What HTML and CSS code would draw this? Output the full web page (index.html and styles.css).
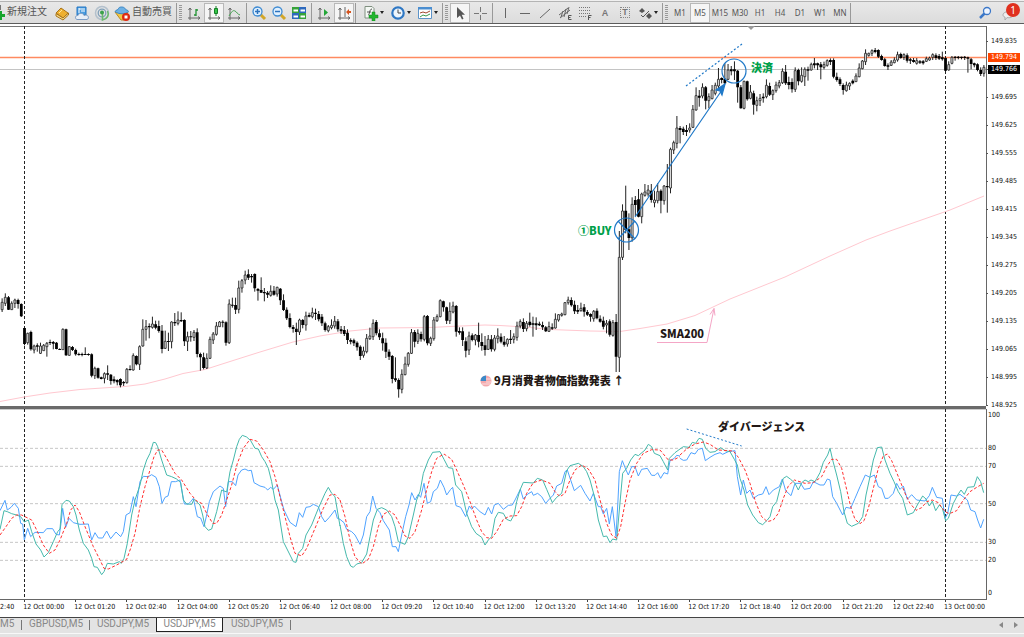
FILE: index.html
```html
<!DOCTYPE html>
<html lang="ja">
<head>
<meta charset="utf-8">
<title>USDJPY,M5</title>
<link rel="stylesheet" href="styles.css">
</head>
<body>
<header class="toolbar">
  <button class="tool text-tool new-order"><svg width="5" height="18" viewBox="0 0 5 18"><path d="M0 3h1v5H0z" fill="#777"/><path d="M0 9h2v3h3v3H2v3H0z" fill="#18a52c"/></svg>新規注文</button>
  <button class="tool" aria-label="book"><svg viewBox="0 0 16 16"><path d="M2 8l5-5 7 5-5 5z" fill="#eeb030" stroke="#a8741a"/><path d="M2 8.500V11l7 4 5.500-5V8L9 13z" fill="#f7dc8c" stroke="#a8741a"/><path d="M5 8l3-3" stroke="#ffe69a"/></svg></button>
  <button class="tool" aria-label="cloud"><svg viewBox="0 0 16 16"><path d="M3 2h9v8H3z" fill="#4b9de0" stroke="#2376c4"/><path d="M5 4h6M7 6h4M5 3v5" stroke="#fff"/><path d="M3 14.500c-3-1-1-5 1-4 1-3 5-3 6 0 4-2 6 3 3 4z" fill="#e7eef7" stroke="#7c9cc4"/></svg></button>
  <button class="tool" aria-label="signals"><svg viewBox="0 0 16 16" fill="none"><circle cx="8" cy="8" r="6.500" stroke="#b3c0cc" stroke-width="1.500"/><circle cx="8" cy="8" r="3.800" stroke="#7f9fb8" stroke-width="1.300"/><path d="M8.500 7v8c5-1 7-5 5-9" stroke="#6cba6e" stroke-width="1.600"/><circle cx="8" cy="7.500" r="2" fill="#3aa04c"/></svg></button>
  <button class="tool text-tool auto"><svg viewBox="0 0 16 16"><path d="M1 7h13l-4 8H7z" fill="#f2c744" stroke="#b98a1e"/><path d="M1 6.500c1-2 3-1 3.500-3C5 1.500 10 1.500 11 3.500c.5 2 3 1 3.500 3-3 3-10 3-13.500 0z" fill="#6eb1e4" stroke="#3b86c3"/><circle cx="12" cy="12" r="4" fill="#dd2b12"/><path d="M10.500 10.500h3v3h-3z" fill="#fff"/></svg>自動売買</button>
  <i class="sep"></i><i class="grip"></i>
  <button class="tool" aria-label="bar chart"><svg viewBox="0 0 16 16" fill="none"><path d="M4 3v12M2 13h12M2.500 5L4 3l1.500 2M12 11.500l2 1.500-2 1.500" stroke="#666"/><path d="M10 4v7M8 10h2M10 5h2" stroke="#239334" stroke-width="1.300"/></svg></button>
  <button class="tool pressed" aria-label="candles"><svg viewBox="0 0 16 16" fill="none"><path d="M4 3v12M2 13h12M2.500 5L4 3l1.500 2M12 11.500l2 1.500-2 1.500" stroke="#666"/><path d="M10 1v10" stroke="#148026"/><path d="M8.500 3.500h3v5h-3z" fill="#35c548" stroke="#148026"/></svg></button>
  <button class="tool" aria-label="line chart"><svg viewBox="0 0 16 16" fill="none"><path d="M4 3v12M2 13h12M2.500 5L4 3l1.500 2M12 11.500l2 1.500-2 1.500" stroke="#666"/><path d="M3 11c3-5 4-6 6-5s2 3 5 4" stroke="#49a455"/></svg></button>
  <i class="sep wide"></i>
  <button class="tool" aria-label="zoom in"><svg viewBox="0 0 16 16"><path d="M9.500 9.500l4.500 4.500" stroke="#d2a628" stroke-width="3"/><circle cx="6.500" cy="6.500" r="4.500" fill="#dff0ff" stroke="#3f8bd2" stroke-width="1.300"/><path d="M4 6.500h5M6.500 4v5" stroke="#2b72bd" stroke-width="1.500"/></svg></button>
  <button class="tool" aria-label="zoom out"><svg viewBox="0 0 16 16"><path d="M9.500 9.500l4.500 4.500" stroke="#d2a628" stroke-width="3"/><circle cx="6.500" cy="6.500" r="4.500" fill="#dff0ff" stroke="#3f8bd2" stroke-width="1.300"/><path d="M4 6.500h5" stroke="#2b72bd" stroke-width="1.500"/></svg></button>
  <button class="tool" aria-label="tile"><svg viewBox="0 0 16 16"><path d="M1 2h7v6H1zM8 8h7v6H8z" fill="#36a33a"/><path d="M8 2h7v6H8zM1 8h7v6H1z" fill="#2d69bd"/><path d="M2.500 4.500H7v2H2.500zM9.500 4.500H14v2H9.500zM2.500 10.500H7v2H2.500zM9.500 10.500H14v2H9.500z" fill="#fff"/></svg></button>
  <i class="sep wide"></i>
  <button class="tool" aria-label="auto scroll"><svg viewBox="0 0 16 16" fill="none"><path d="M4 3v12M2 13h12M2.500 5L4 3l1.500 2M12 11.500l2 1.500-2 1.500" stroke="#666"/><path d="M8 4l4 3.500L8 11z" fill="#23a637"/></svg></button>
  <button class="tool pressed" aria-label="chart shift"><svg viewBox="0 0 16 16" fill="none"><path d="M4 3v12M2 13h12M2.500 5L4 3l1.500 2M12 11.500l2 1.500-2 1.500M9 2v10" stroke="#666"/><path d="M10 7l3-3v2h2v2h-2v2z" fill="#d6541e"/></svg></button>
  <i class="sep gap"></i>
  <button class="tool drop" aria-label="indicators"><svg viewBox="0 0 16 16"><path d="M2 1.500h7l2 2V13H2z" fill="#f4f8f4" stroke="#809080"/><path d="M5 10c2 0 1-6 4-6M4 7h4" stroke="#555" fill="none"/><path d="M9 7h3v3h3v3h-3v3H9v-3H6v-3h3z" fill="#22b52e" stroke="#108a1c" stroke-width=".5"/></svg></button>
  <button class="tool drop" aria-label="periods"><svg viewBox="0 0 16 16"><circle cx="8" cy="8" r="5.700" fill="#eef6fd" stroke="#2f78c4" stroke-width="2.200"/><path d="M8 4.500V8h3" stroke="#444" fill="none"/></svg></button>
  <button class="tool drop" aria-label="templates"><svg viewBox="0 0 16 16"><path d="M1.500 2.500h13v11h-13z" fill="#fff" stroke="#5d94c9"/><path d="M1 2h14v2.500H1z" fill="#4b8ed0"/><path d="M3 8l3-1 3 1 4-2" stroke="#a3472c" fill="none"/><path d="M3 12l3-2 3 1 4-2" stroke="#3d984c" fill="none"/></svg></button>
  <i class="sep"></i><i class="grip"></i>
  <button class="tool pressed" aria-label="cursor"><svg viewBox="0 0 16 16"><path d="M5 2v11l3-2.500 2 4 1.500-.8-1.800-3.900H13z" fill="#555"/></svg></button>
  <button class="tool" aria-label="crosshair"><svg viewBox="0 0 16 16"><path d="M8.500 2v5M8.500 10v5M2 8.500h5M10 8.500h5" stroke="#777"/></svg></button>
  <i class="sep wide"></i>
  <button class="tool" aria-label="vertical line"><svg viewBox="0 0 16 16"><path d="M8.500 3v10" stroke="#666"/></svg></button>
  <button class="tool" aria-label="horizontal line"><svg viewBox="0 0 16 16"><path d="M3 8.500h10" stroke="#666"/></svg></button>
  <button class="tool" aria-label="trend line"><svg viewBox="0 0 16 16"><path d="M3 13l10-9" stroke="#666"/></svg></button>
  <button class="tool" aria-label="channel"><svg viewBox="0 0 16 16" fill="none"><path d="M2 10l9-7M3 13l10-8M4 12l2-6M7 12l2-8M10 9l2-7" stroke="#666"/><path d="M14.500 10.500h-3v4h3M11.500 12.500h2" stroke="#555"/></svg></button>
  <button class="tool" aria-label="fibonacci"><svg viewBox="0 0 16 16" fill="none"><path d="M2 2.500h12M2 5.500h12M2 8.500h12M2 11.500h7" stroke="#777" stroke-dasharray="1 1"/><path d="M14.500 10.500h-3V15M11.500 12.500h2" stroke="#555"/></svg></button>
  <button class="tool letter">A</button>
  <button class="tool letter"><span class="boxed">T</span></button>
  <button class="tool drop arrows" aria-label="arrows"><svg viewBox="0 0 16 16" fill="none"><path d="M5 3l3 3-3 2-3-2zM12 8l3 3-3 3-3-3z" fill="#555"/><path d="M4 10l2 2 6-6" stroke="#555"/></svg></button>
  <i class="sep"></i><i class="grip"></i>
  <button class="tool period">M1</button><button class="tool period pressed">M5</button><button class="tool period">M15</button><button class="tool period">M30</button><button class="tool period">H1</button><button class="tool period">H4</button><button class="tool period">D1</button><button class="tool period">W1</button><button class="tool period">MN</button>
  <i class="sep"></i>
  <button class="tool search" aria-label="search"><svg viewBox="0 0 16 16" fill="none"><path d="M7.500 8.500L3 13" stroke="#3c78c8" stroke-width="2.500"/><circle cx="10" cy="6" r="3.500" fill="#eef5ff" stroke="#3c78c8" stroke-width="1.300"/></svg></button>
  <button class="tool chat" aria-label="notifications"><svg viewBox="0 0 16 16"><path d="M1 10c0-4 10-5 10-1 0 4-4 4-6 3.500L3 15v-3c-1 0-2-1-2-2z" fill="#eee" stroke="#aaa"/></svg><span class="badge">1</span></button>
</header>

<main class="chart">
  <section class="plot price-plot">
    <svg class="canvas" viewBox="0 26 986 380" preserveAspectRatio="none">
      <path d="M0 57.500H986" stroke="#ff8a60" stroke-width="1.500"/>
      <path d="M0 69.500H986" stroke="#c4c4c4"/>
      <path class="day" d="M24.500 26V406M945.500 26V406"/>
      <path class="sma" d="M0 401.500L24 397 50 393 80 389.500 110 387.500 125 386.500 145 384 165 379 183 373.500 205 369.500 230 361.500 260 352 293 342 320 336 350 331 380 328 430 327.500 450 326.500 485 325 500 325.500 525 327 550 329.500 590 331 620 331.500 640 328.500 667 324 695 315.500 730 299 785 277 830 256 866 240 890 231 950 210 984 196"/>
      <g id="candles"></g>
      <path d="M747 26h8l-4 4z" fill="#999"/>
      <g class="mark">
        <circle cx="626.500" cy="230" r="12"/><circle cx="734" cy="71" r="12"/>
        <path d="M618 221l17 18M618 239l17-18M635 217L722 90"/>
        <path d="M686 86L742 44" stroke-dasharray="2 2"/>
        <path d="M725 84l-3 11-2-4-4-1z" fill="#2079c8"/>
      </g>
      <path d="M657 342.500h50l7-34m-4 6l4-6 1 7" fill="none" stroke="#f4a6c6"/>
      <circle cx="486" cy="381" r="5.500" fill="#f3a9ad"/><path d="M486 379h5M486 382h5M482 384h8" stroke="#fbdcdd"/><path d="M486 375.500a5.500 5.500 0 0 0-5.500 5.500h5.500z" fill="#3c8ac8"/>
    </svg>
    <span class="note green exit">決済</span>
    <span class="note green buy">①BUY</span>
    <span class="note sma-label">SMA200</span>
    <span class="note cpi">9月消費者物価指数発表 ↑</span>
  </section>
  <aside class="axis price-axis">
    <ol class="prices"><li>149.835</li><li></li><li>149.695</li><li>149.625</li><li>149.555</li><li>149.485</li><li>149.415</li><li>149.345</li><li>149.275</li><li>149.205</li><li>149.135</li><li>149.065</li><li>148.995</li><li>148.925</li></ol>
    <span class="quote ask">149.794</span><span class="quote bid">149.766</span>
  </aside>
  <div class="divider"></div>
  <section class="plot">
    <svg class="canvas" viewBox="0 27 2958 570" preserveAspectRatio="none">
      <path class="level" d="M0 145H2958M0 199H2958M0 311H2958M0 427H2958M0 481H2958"/>
      <path class="day" d="M73.500 27V597M2836.500 27V597"/>
      <path class="blue" d="M0 332L15 301 22 330 33 322 43 310 55 325 62 370 68 372 73 420 83 385 92 410 105 397 130 398 140 386 158 386 168 403 178 405 183 370 188 325 197 382 207 355 220 368 240 373 265 372 275 420 285 398 295 414 308 414 320 393 332 416 348 396 362 410 370 395 378 345 390 338 400 290 408 320 420 245 430 229 445 230 455 224 468 232 478 260 486 310 495 292 504 288 514 245 527 245 540 240 553 312 565 312 572 305 580 295 592 350 602 354 612 380 620 345 628 305 640 275 660 258 670 265 677 320 685 245 697 245 707 257 714 225 725 210 735 207 745 212 754 211 762 248 780 258 795 262 803 270 812 262 820 268 832 255 845 305 852 330 870 367 888 380 898 338 908 352 918 322 930 320 940 313 955 320 965 350 975 366 988 352 1005 330 1012 355 1020 358"/>
      <path class="teal" d="M0 388L12 332 22 335 35 341 50 345 62 350 73 366 85 360 95 395 108 432 122 450 132 471 145 458 160 425 173 395 180 387 186 314 198 301 208 303 220 320 228 345 238 390 250 430 265 450 275 475 282 500 292 502 305 524 312 515 322 490 340 492 358 485 364 490 372 475 382 430 395 345 405 300 420 255 430 210 440 180 450 160 460 127 467 128 473 140 485 180 500 225 515 230 530 237 542 248 550 300 560 312 575 313 582 298 600 315 608 345 615 380 625 391 635 387 650 335 665 270 680 276 690 215 700 180 710 140 718 118 727 106 740 111 752 122 765 145 775 147 785 170 795 185 805 205 815 245 825 300 835 330 850 425 870 465 880 485 888 487 895 460 908 445 918 405 935 375 955 325 975 280 985 262 995 280 1005 290 1020 378"/>
      <path class="red" d="M0 405L18 380 35 355 50 345 65 345 95 360 110 390 130 435 148 460 165 450 180 420 200 370 212 330 225 315 238 335 255 380 280 440 300 480 312 505 325 507 350 495 380 478 392 445 405 400 420 320 435 260 450 210 462 170 473 150 485 150 500 175 525 220 545 240 570 280 590 303 605 310 620 340 638 370 650 370 665 345 680 300 695 255 712 190 730 145 750 118 770 123 790 150 810 185 825 230 840 290 855 350 870 410 885 460 905 468 920 445 945 385 970 325 990 285 1005 283 1020 300"/>
      <g transform="translate(1020 0)">
        <path class="blue" d="M0 358L12 368 20 388 35 395 45 405 60 433 70 405 80 350 90 335 98 288 108 325 120 338 130 362 148 390 157 440 168 440 175 455 185 405 197 350 207 315 215 278 225 300 235 283 242 292 252 250 262 310 272 305 280 275 292 265 301 240 312 262 320 285 332 268 338 262 348 317 362 322 377 350 388 318 395 328 403 318 420 335 435 345 445 322 455 342 463 315 475 310 490 328 505 316 517 315 525 300 541 268 550 297 562 283 575 275 580 286 593 280 605 290 617 310 630 295 640 285 650 258 665 250 675 215 682 210 692 240 703 272 722 256 735 280 750 303 760 280 775 320 782 320 790 342 800 325 808 372 817 320 828 410 834 300 838 215 847 182 858 210 865 225 875 200 885 200 895 228 905 208 922 205 935 226 945 226 953 218 962 235 972 218 983 222 990 182 1003 175 1010 166 1020 168"/>
        <path class="teal" d="M0 375L10 430 20 470 32 498 40 502 50 492 65 488 80 462 90 410 100 360 112 328 125 323 140 330 155 350 165 380 175 425 195 433 205 410 220 345 230 300 240 275 250 220 265 180 278 157 300 155 312 178 325 203 338 205 347 255 365 275 380 340 395 380 408 400 425 412 435 435 445 420 455 410 465 355 475 337 490 340 500 358 512 363 522 345 530 305 540 270 550 247 580 249 592 235 608 240 620 268 637 308 650 292 665 280 680 212 690 197 715 190 730 200 740 215 750 240 762 285 775 360 790 410 800 408 810 428 818 417 830 420 838 330 848 220 860 205 872 180 885 163 895 167 915 150 925 133 935 140 943 160 960 167 970 185 983 210 988 175 1005 158 1020 147"/>
        <path class="red" d="M0 300L15 350 30 420 45 470 65 492 85 478 100 440 115 380 130 343 148 333 165 345 180 375 195 408 210 415 225 395 245 330 260 270 275 215 290 175 312 162 335 178 350 210 370 255 390 305 410 360 425 395 440 413 455 415 470 395 490 358 510 348 530 347 545 320 560 280 580 248 605 240 630 250 645 275 660 290 675 280 690 240 705 210 725 195 745 207 765 240 780 300 800 370 815 405 830 415 842 380 855 310 870 240 890 190 910 160 935 149 960 150 985 180 1000 180 1020 170"/>
      </g>
      <g transform="translate(2040 0)">
        <path class="blue" d="M0 175L10 181 20 180 33 158 45 162 55 148 67 145 76 182 90 172 105 163 120 158 128 163 145 155 165 152 172 230 182 285 190 240 200 280 210 270 220 295 235 285 248 282 258 260 267 284 280 270 298 260 307 237 317 272 333 287 345 250 362 250 373 268 390 265 400 245 420 255 432 255 442 237 450 240 458 290 470 310 488 345 498 322 512 325 525 295 540 260 556 225 570 232 583 225 595 260 605 265 615 295 625 295 640 280 650 250 660 268 670 258 682 298 695 284 710 300 735 303 748 287 757 262 770 292 787 295 795 355 803 340 813 285 830 288 840 283 862 300 872 330 885 335 893 360 902 384 911 358"/>
        <path class="teal" d="M0 147L10 140 27 142 37 127 47 130 57 115 67 118 77 145 90 157 105 155 122 143 135 152 150 155 163 178 172 195 180 235 192 270 203 315 218 345 235 368 248 374 262 360 270 350 278 320 290 305 300 265 310 235 320 229 332 238 345 250 355 270 365 248 375 240 385 245 393 240 405 245 420 218 430 187 443 165 450 145 458 180 470 225 482 275 492 335 502 370 515 379 535 370 548 350 558 285 570 230 580 180 592 143 605 141 615 180 630 220 642 245 655 275 668 295 682 345 700 338 712 315 728 288 738 297 748 318 757 303 767 332 778 315 787 325 797 362 805 355 820 310 833 285 843 270 853 283 863 262 882 260 892 230 902 245 911 278"/>
        <path class="red" d="M0 165L20 147 45 132 70 126 90 133 115 150 160 153 175 172 195 210 210 250 228 310 245 350 262 365 280 360 295 340 310 295 325 258 343 240 375 250 400 248 425 230 440 200 455 178 470 178 485 205 498 260 512 320 525 358 540 371 552 362 565 325 580 265 595 205 610 168 622 162 635 182 655 230 675 280 690 310 708 331 725 323 740 305 757 300 775 308 795 335 808 341 830 332 850 300 870 275 890 262 911 250"/>
        <path class="trend" d="M20 87L185 138"/>
      </g>
    </svg>
    <span class="note divergence">ダイバージェンス</span>
  </section>
  <aside class="axis level-axis">
    <span class="l100">100</span><span class="l80">80</span><span class="l70">70</span><span class="l50">50</span><span class="l30">30</span><span class="l20">20</span><span class="l0">0</span>
  </aside>
  <div class="time-axis">
    <ol class="times"><li class="partial">2:40</li><li>12 Oct 00:00</li><li>12 Oct 01:20</li><li>12 Oct 02:40</li><li>12 Oct 04:00</li><li>12 Oct 05:20</li><li>12 Oct 06:40</li><li>12 Oct 08:00</li><li>12 Oct 09:20</li><li>12 Oct 10:40</li><li>12 Oct 12:00</li><li>12 Oct 13:20</li><li>12 Oct 14:40</li><li>12 Oct 16:00</li><li>12 Oct 17:20</li><li>12 Oct 18:40</li><li>12 Oct 20:00</li><li>12 Oct 21:20</li><li>12 Oct 22:40</li><li>13 Oct 00:00</li></ol>
  </div>
</main>

<footer class="tabs">
  <button class="tab first">M5</button><button class="tab">GBPUSD,M5</button><button class="tab plain">USDJPY,M5</button><button class="tab active">USDJPY,M5</button><button class="tab">USDJPY,M5</button>
  <div class="scroll"><button aria-label="scroll left"><svg width="4" height="6"><path d="M4 0v6L0 3z" fill="#888"/></svg></button><button aria-label="scroll right"><svg width="4" height="6"><path d="M0 0v6l4-3z" fill="#888"/></svg></button></div>
</footer>
<script src="candles.js"></script>
</body>
</html>
```
FILE: styles.css
```css
* { box-sizing: border-box; }
body {
  margin: 0;
  height: 100vh;
  display: flex;
  flex-direction: column;
  overflow: hidden;
  background: #fff;
  font-family: "DejaVu Sans Condensed", "DejaVu Sans", sans-serif;
  font-size: 7px;
  color: #111;
}
button { font: inherit; color: inherit; background: none; border: 0; padding: 0; margin: 0; }
ol { list-style: none; margin: 0; padding: 0; }

.toolbar {
  flex: none;
  display: flex;
  align-items: center;
  height: 24px;
  padding-top: 2px;
  background: linear-gradient(#f0f0f0 1px, #b4b4b4 1px, #b4b4b4 2px, #e8e8e8 2px, #dcdcdc);
  border-bottom: 1px solid #5c5c5c;
}
.tool {
  flex: none;
  display: flex;
  align-items: center;
  justify-content: center;
  width: 20px;
  height: 20px;
  color: #666;
}
.tool svg { flex: none; width: 16px; height: 16px; }
.text-tool { font: 10px/20px "Noto Sans CJK JP", sans-serif; color: #555; white-space: nowrap; padding-bottom: 3px; }
.new-order { width: 52px; justify-content: flex-start; gap: 2px; }
.new-order svg { width: 5px; height: 18px; }
.auto { width: 64px; justify-content: flex-start; gap: 2px; padding-left: 2px; }
.auto svg { margin-top: 3px; }
.pressed { background: #f5f5f5; border: 1px solid #b8b8b8; }
.sep { flex: none; width: 1px; height: 20px; background: #999; }
.wide { margin: 0 2px; }
.gap { margin: 0 5px 0 1px; }
.grip {
  flex: none;
  width: 3px;
  height: 16px;
  margin: 0 2px;
  background: repeating-linear-gradient(#999 0 1px, #e4e4e4 1px 2px);
}
.drop { width: 27px; padding-left: 2px; justify-content: flex-start; gap: 1px; }
.drop::after { content: ""; border: 2px solid transparent; border-top: 3px solid #222; border-bottom: 0; }
.letter { font: bold 9px "Liberation Sans", sans-serif; color: #777; }
.boxed { width: 10px; line-height: 9px; border: 1px dotted #888; }
.period { font: 8px "Noto Sans", sans-serif; color: #555; }
.search { margin-left: auto; }
.chat { position: relative; margin: 0 4px 0 5px; }
.badge {
  position: absolute;
  top: 0;
  right: 0;
  width: 14px;
  height: 14px;
  border-radius: 50%;
  background: #e0301e;
  color: #fff;
  font: 10px/14px "Noto Sans", sans-serif;
  text-align: center;
}

.chart {
  flex: 1;
  min-height: 0;
  margin-top: 2px;
  display: grid;
  grid-template-columns: minmax(0, 1fr) 38px;
  grid-template-rows: minmax(0, 380fr) 3px minmax(0, 190fr) 18px;
}
.plot { position: relative; box-shadow: 1px 0 #666; }
.price-plot { box-shadow: 1px 0 #666, inset 0 1px #777; }
.canvas { display: block; width: 100%; height: 100%; }
.canvas path { vector-effect: non-scaling-stroke; }
.day { stroke: #222; stroke-dasharray: 3 2; }
.sma { fill: none; stroke: #ffc8d0; }
.mark { fill: none; stroke: #2079c8; stroke-width: 1.2px; }
.level { stroke: #c6c6c6; stroke-dasharray: 3 2; }
.blue { fill: none; stroke: #4fa3ff; }
.teal { fill: none; stroke: #45b9ac; }
.red { fill: none; stroke: #ff3030; stroke-dasharray: 3 2; }
.trend { stroke: #2079c8; stroke-dasharray: 2 2; }
.wick { stroke: #222; }
.up { fill: #ddd; stroke: #222; stroke-width: 0.8px; }
.down { fill: #000; }

.note {
  position: absolute;
  font: 900 11px/16px "Noto Sans CJK JP", sans-serif;
  color: #231815;
  white-space: nowrap;
}
.green { color: #00a04a; }
.exit { left: 751px; top: 33px; }
.buy { left: 578px; top: 196px; }
.sma-label { left: 660px; top: 299px; }
.cpi { left: 494px; top: 346px; }
.divergence { left: 718px; top: 9px; }

.axis { position: relative; line-height: 8px; }
.prices { padding-top: 1px; }
.prices li { display: flex; align-items: center; gap: 3px; height: 28px; }
.prices li::before { content: ""; width: 2px; height: 1px; background: #555; }
.quote { position: absolute; left: 2px; width: 32px; height: 9px; padding-left: 3px; line-height: 9px; color: #fff; }
.ask { top: 27px; background: #ff4500; }
.bid { top: 39px; background: #000; }
.divider { grid-column: 1 / -1; margin-right: 38px; background: #6a6a6a; box-shadow: 0 1px #ccc; }
.level-axis span { position: absolute; left: 2px; }
.l100 { top: 2px; }
.l80 { top: 35px; }
.l70 { top: 53px; }
.l50 { top: 91px; }
.l30 { top: 129px; }
.l20 { top: 147px; }
.l0 { top: 180px; }
.time-axis { border-top: 1px solid #666; margin-right: -1px; }
.times { display: flex; justify-content: space-between; margin-left: -28px; }
.times li { width: 43px; white-space: nowrap; line-height: 8px; }
.times li::before { content: ""; display: block; width: 1px; height: 2px; margin: 0 0 1px 1px; background: #444; }
.times .partial { padding-left: 28px; }
.times .partial::before { visibility: hidden; }

.tabs {
  flex: none;
  display: flex;
  align-items: flex-start;
  height: 20px;
  border-top: 1px solid #444;
  background: linear-gradient(#e3e3e3 15px, #f8f8f8 15px, #f8f8f8 16px, #e3e3e3 16px);
  font: 10px/12px "Liberation Sans Narrow", "Roboto", sans-serif;
  color: #888;
}
.tab { position: relative; width: 68px; height: 14px; padding-bottom: 2px; }
.tab::after { content: ""; position: absolute; right: 0; top: 2px; width: 1px; height: 10px; background: #777; }
.first { width: 22px; text-align: left; }
.plain::after, .active::after { display: none; }
.plain { width: 66px; }
.active { width: 67px; background: #fff; border: solid #222; border-width: 0 1px 1px; }
.scroll { display: flex; gap: 11px; margin: 4px 6px 0 auto; }
.scroll svg { display: block; }
```
FILE: candles.js
```js
// Each run: [first bar index, top level, "direction high,bodyTop,bodyBottom,low ..."] in thirds of a unit.
const runs = [
  [-7, 240, "u175,187,209,216 u160,172,190,198 d168,172,209,210 u184,190,209,210 u176,180,190,204 d176,180,192,206 d190,192,229,231 d262,264,312,316 u278,280,308,314 d272,276,328,332 u314,318,330,340 d310,316,320,335 u308,318,340,342 u312,316,332,333 u306,310,320,350 d299,306,309,315 d303,306,311,328 d306,308,327,328 d325,327,329,330 u265,268,329,330 d266,268,346,348 u318,320,346,347 d318,321,330,333 d326,330,343,347 d338,342,345,347 d338,342,345,349 d322,342,344,345 d340,342,345,347 d340,343,407,412 u380,385,407,417 d383,385,413,416 d410,412,417,418 u397,401,415,430 d376,400,404,420 d402,404,423,434 d409,418,424,430 d418,420,427,436 d415,417,436,442 d423,426,430,438 u384,388,428,431 d376,387,390,392 u340,347,390,392 d346,348,373,376 u316,320,373,390 u238,268,318,320 u240,260,268,302 d250,258,262,295 u230,252,262,266 d242,253,263,268 d242,258,273,278 d255,272,327,340 u272,304,325,327 d278,303,305,333 u244,246,305,325 d219,246,250,258 u214,240,250,256 d217,240,244,246 d238,240,304,318 u275,290,304,333 d273,289,292,305 u270,277,292,303 d265,277,342,352 d338,342,352,392 d338,352,384,388 u340,355,384,387 u290,298,355,357 u276,282,300,312 u246,258,283,287 u243,246,260,261 d241,245,248,262 d244,247,308,317 u178,192,308,312 d173,194,197,203 d173,195,209,222 u122,144,208,220 u117,122,144,158 u92,105,120,133 d88,103,113,120 d102,108,112,128 d100,102,145,155 d144,147,152,182"],
  [74, 260, "d52,90,98,98 d84,96,100,124 d93,98,104,114 u76,94,106,110 d78,92,104,107 u80,82,102,110 d84,86,121,135 d103,121,150,153 d142,149,175,180 d160,174,201,205 d195,201,207,218 d188,206,216,255 u176,180,216,225 d177,180,195,205 u155,168,195,212 d158,165,170,172 u143,158,170,175 d146,158,162,180 d153,162,178,184 d162,170,190,198 d185,190,210,215 u195,200,212,217 u178,196,203,208 u168,184,198,206 d177,184,208,215 d198,208,214,222 d198,210,222,228 d208,218,240,252 d235,240,245,253 d236,241,250,258 d244,248,262,272 d256,260,288,300 u260,273,286,293 u222,235,275,280 u203,228,236,240 u178,190,230,240 d180,186,220,226 d208,220,232,240 d218,235,250,272 d235,248,275,294 d268,275,290,300 d285,288,357,370 d292,355,361,366 d355,360,388,413 u328,343,388,400 u290,312,344,346 u276,280,313,320 u207,218,280,282 d210,216,245,262 u208,220,244,252 d215,222,238,245 u165,170,238,244 d165,168,250,256 u230,235,250,258 u171,180,236,242 u163,170,182,186 u118,122,170,172 d122,124,142,155 d140,142,182,192 u127,154,182,192 u125,138,156,160 d135,138,215,230 d202,213,218,224 d202,214,240,258 d232,244,272,292 u215,228,270,285 d220,226,240,244 u222,225,240,256 d188,225,245,262 d220,246,258,272 d228,256,270,287 u225,238,268,270 d225,238,268,275 u225,234,268,274 u205,228,236,250"],
  [149, 170, "d490,500,515,520 d498,515,524,530 u505,508,522,530 d480,506,510,522 u490,500,508,520 u455,468,502,512 u448,455,468,475 d445,456,477,486 u453,460,476,484 d428,455,465,470 d440,460,464,500 d442,460,466,480 d455,461,466,468 d455,465,472,480 d468,472,484,486 u455,470,484,486 d460,472,476,480 u430,448,474,476 u433,434,450,455 u428,432,436,440 u396,398,434,436 u380,390,398,404 d382,390,406,410 d392,404,424,432 d405,420,425,432 u398,415,422,425 d402,412,425,440 d420,426,434,438 d430,432,440,455 u420,424,446,455 d415,422,445,448 d436,446,455,458 d440,452,470,478 u450,460,465,490 d448,454,494,500 u450,458,496,500 d432,456,560,606 u183,262,562,606 u103,123,262,270 d47,122,180,190 d130,178,204,240 u82,103,203,215 d78,90,105,138 d57,88,140,142 u68,72,140,160 u42,66,76,80 u45,60,72,80 d42,62,90,98 u62,90,98,112 u40,65,92,100 d58,62,92,130 u45,48,92,104 d-18,48,52,128"],
  [202, 30, "u353,358,474,490 u332,338,360,372 u258,294,340,355 d288,294,300,340 d290,296,306,315 d285,300,306,318 u280,294,300,308 u225,238,292,294 u172,197,240,242 d180,197,203,230 u160,172,198,205 d168,172,212,238 u190,200,212,235 u165,180,206,208 u158,166,190,196 u114,148,168,175 d142,144,150,160 d100,146,160,163 u102,120,148,150 d108,118,124,136 d94,118,124,150 d120,122,172,218 d165,172,235,236 u152,154,235,238 d152,154,208,212 u165,186,205,208 d182,190,224,254 u200,212,226,244 u192,205,212,228 d190,200,205,218 u148,166,200,205 d158,168,194,198 u178,182,194,210 u155,165,182,188 u150,158,168,175 u115,124,158,162 d105,125,160,165 d140,156,165,178 d145,156,178,188 u112,122,178,186 d116,120,154,166 u112,136,154,158 u112,118,140,168 d110,118,122,152 u98,103,120,122 d84,100,106,115 d98,100,106,120 d96,103,112,148 u95,104,112,118 u88,92,106,110 d85,90,96,105 d85,90,140,145 d128,140,150,155 d142,148,162,168 d160,165,180,194 u155,165,182,185 u157,160,168,180 d148,152,160,163 u130,138,155,156 u100,114,140,142 u90,93,116,118 u58,70,95,105 u68,70,76,80 u58,62,70,78 d54,60,66,70 d58,60,80,84 d74,78,90,92 d84,88,108,110 d100,106,110,120 u90,96,106,108 u82,90,98,100 u65,74,90,95 d68,72,84,86 u70,74,82,90 d70,76,92,98 d84,88,92,102 d84,90,96,98 u84,92,100,104 d90,94,98,102 d90,94,100,104 u80,86,94,96 u80,84,90,92 u70,74,82,90 d70,76,84,90 d72,78,86,90 d65,82,88,92 d80,84,122,125 u94,104,120,122 u78,82,100,103 d78,80,84,92 d78,80,84,88 d80,80,84,88 d78,80,84,90 d80,82,86,128 d84,88,102,118 d98,100,106,112 d100,103,120,124 d112,120,132,138 u105,112,130,140"]
];

const step = 3.198;
const firstX = 24.5;
let wicks = "";
let ups = "";
let downs = "";
for (const [start, level, bars] of runs) {
  bars.split(" ").forEach((bar, n) => {
    const x = firstX + (start + n) * step;
    const [high, top, bottom, low] = bar.slice(1).split(",").map(v => level + Number(v) / 3);
    wicks += `M${x} ${high}V${low}`;
    if (bar[0] === "u") ups += `M${x - 1} ${top}h2V${bottom}h-2z`;
    else downs += `M${x - 1.4} ${top}h2.800V${Math.max(bottom, top + 1)}h-2.800z`;
  });
}
document.getElementById("candles").innerHTML =
  `<path class="wick" d="${wicks}"/><path class="up" d="${ups}"/><path class="down" d="${downs}"/>`;
```
